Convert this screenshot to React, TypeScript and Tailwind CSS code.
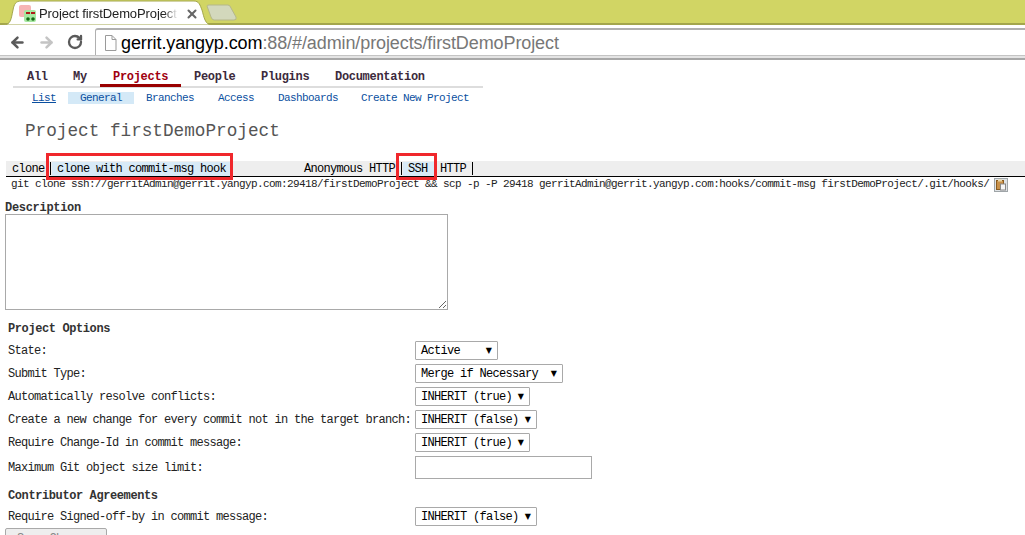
import { ArrowLeft, ArrowRight, RotateCw, X } from "lucide-react";

const mono = "font-['Liberation_Mono',monospace]";

const topMenu = [
  { label: "All", w: "w-[46px]" },
  { label: "My", w: "w-[40px]" },
  { label: "Projects", w: "w-[94px]", active: true },
  { label: "People", w: "w-[67px]" },
  { label: "Plugins", w: "w-[74px]" },
  { label: "Documentation", w: "w-[100px]" },
];

const subMenu = [
  { label: "Branches", w: "w-[72px]" },
  { label: "Access", w: "w-[60px]" },
  { label: "Dashboards", w: "w-[83px]" },
  { label: "Create New Project", w: "w-[110px]" },
];

function Dropdown({ value, w }: { value: string; w: string }) {
  return (
    <div
      className={`flex h-[19px] items-center justify-between rounded-[1px] border border-[#a9a9a9] bg-white pl-[5px] pr-[5px] text-[12px] tracking-[-0.7px] text-black ${w}`}
    >
      <span className="whitespace-pre">{value}</span>
      <span className="font-['DejaVu_Sans',sans-serif] text-[8px] tracking-normal">▼</span>
    </div>
  );
}

function OptionRow({ label, children }: { label: string; children?: React.ReactNode }) {
  return (
    <div className="flex h-[23px] items-center">
      <div className="w-[407px] whitespace-pre text-[12px] tracking-[-0.7px] text-[#222]">{label}</div>
      {children}
    </div>
  );
}

function Favicon() {
  return (
    <svg width="17" height="17" viewBox="0 0 17 17" className="shrink-0">
      <rect x="0" y="0" width="12" height="12" rx="2" fill="#f7b5b5" />
      <rect x="5" y="5" width="12" height="12" rx="2" fill="#a6e8a0" />
      <rect x="7" y="7" width="4" height="2" fill="#b01818" />
      <rect x="12" y="7" width="4" height="2" fill="#b01818" />
      <circle cx="9" cy="14" r="1.8" fill="#156b15" />
      <circle cx="14" cy="14" r="1.8" fill="#156b15" />
    </svg>
  );
}

function BrowserChrome() {
  return (
    <>
      <div className="relative flex h-[25px] border-b-2 border-[#a3a64c] bg-[#d1d564] font-['Liberation_Sans',sans-serif]">
        <svg width="240" height="25" viewBox="0 0 240 25" className="absolute left-0 top-0">
          <path d="M3 25 C11 25 11 19 13 10 C14 4 16 1 21 1 L194 1 C199 1 200 5 202 10 C204 17 205 25 212 25 Z" fill="#fff" stroke="#a3a64c" />
          <path d="M207 6 Q207 5 209 5 L228 5 Q230 5 231 8 L236 17 Q237 20 234 20 L214 20 Q212 20 211 17 Z" fill="#d3d8bc" stroke="#b4b78a" />
        </svg>
        <div className="relative ml-[19px] mt-[5px] flex h-[17px] w-[180px] items-center">
          <Favicon />
          <span className="ml-[3px] w-[139px] overflow-hidden whitespace-nowrap text-[13px] tracking-[-0.1px] text-[#222] [mask-image:linear-gradient(to_right,black_90%,transparent)]">
            Project firstDemoProject
          </span>
          <X size={14} strokeWidth={3.5} className="ml-[7px] text-[#666]" />
        </div>
      </div>
      <div className="flex h-[30px] items-end bg-white font-['Liberation_Sans',sans-serif]">
        <div className="flex h-[30px] w-[95px] items-center pl-[9px] pt-[4px]">
          <ArrowLeft size={17} strokeWidth={3.5} className="text-[#5a5a5a]" />
          <ArrowRight size={17} strokeWidth={3.5} className="ml-[12px] text-[#c4c4c4]" />
          <RotateCw size={16} strokeWidth={3.5} className="ml-[12px] text-[#5a5a5a]" />
        </div>
        <div className="flex h-[27px] flex-1 items-center rounded-tl-[3px] border-l border-t-2 border-[#b0b0b0] pl-[8px]">
          <svg width="13" height="16" viewBox="0 0 13 16" className="shrink-0">
            <path d="M1.5 .5 H8 L12 4.5 V15.5 H1.5 Z M8 .5 V4.5 H12" fill="#fff" stroke="#9a9a9a" />
          </svg>
          <span className="ml-[4px] whitespace-nowrap text-[18px] tracking-[-0.1px] text-black">
            gerrit.yangyp.com<span className="text-[#777]">:88/#/admin/projects/firstDemoProject</span>
          </span>
        </div>
      </div>
      <div className="h-[5px] border-b-2 border-t border-b-[#a8a8a8] border-t-[#c4c4c4] bg-[#e4e4e4]" />
    </>
  );
}

function Menus() {
  return (
    <div className="ml-[13px] w-[470px]">
      <div className="flex h-[28px] items-start border-b-2 border-[#ddd] pl-[14px] pt-[11px] text-[12px] font-bold tracking-[-0.3px]">
        {topMenu.map((m) => (
          <div key={m.label} className={`${m.w} ${m.active ? "-ml-[13px] pl-[13px]" : ""} relative h-[15px] whitespace-nowrap ${m.active ? "text-[#a00010]" : "text-[#3c2a3c]"}`}>
            {m.label}
            {m.active && <div className="absolute bottom-[-1px] left-0 h-[3px] w-[81px] bg-[#990000]" />}
          </div>
        ))}
      </div>
      <div className="mt-[3px] flex h-[14px] items-center pl-[19px] text-[#0a4fa0]">
        <span className="w-[36px] underline">List</span>
        <span className="flex h-[12px] w-[66px] items-center justify-center bg-[#d4e9f7]">General</span>
        <div className="ml-[12px] flex">
          {subMenu.map((m) => (
            <span key={m.label} className={`${m.w} whitespace-nowrap`}>
              {m.label}
            </span>
          ))}
        </div>
      </div>
    </div>
  );
}

function Sep() {
  return <div className="h-[13px] w-px shrink-0 bg-black" />;
}

function CloneBar() {
  return (
    <div className="relative mt-[20px]">
      <div className="ml-[6px] flex h-[16px] items-center border-b border-black bg-[#eeeeee] text-[12px] tracking-[-0.7px] text-black">
        <span className="ml-[6px] w-[38px]">clone</span>
        <Sep />
        <span className="ml-[1px] flex h-[14px] w-[178px] items-center bg-[#d8eaf7] pl-[5px]">clone with commit-msg hook</span>
        <span className="ml-[74px] w-[97px] whitespace-nowrap">Anonymous HTTP</span>
        <Sep />
        <span className="ml-[1px] flex h-[14px] w-[31px] items-center bg-[#d8eaf7] pl-[5px]">SSH</span>
        <Sep />
        <span className="ml-[5px] w-[32px]">HTTP</span>
        <Sep />
      </div>
      <div className="pointer-events-none absolute left-[46px] top-[-8px] h-[27px] w-[187px] border-[3px] border-[#f0282c]" />
      <div className="pointer-events-none absolute left-[396px] top-[-8px] h-[27px] w-[41px] border-[3px] border-[#f0282c]" />
      <div className="flex h-[15px] items-center whitespace-nowrap pl-[11px] text-[#222]">
        git clone ssh://gerritAdmin@gerrit.yangyp.com:29418/firstDemoProject &amp;&amp; scp -p -P 29418 gerritAdmin@gerrit.yangyp.com:hooks/commit-msg firstDemoProject/.git/hooks/
        <svg width="14" height="14" viewBox="0 0 14 14" className="ml-[5px] shrink-0">
          <rect x=".5" y=".5" width="13" height="13" fill="#dfe3e6" stroke="#9fa5a8" />
          <rect x="2.5" y="2.5" width="7" height="9" fill="#c9914a" stroke="#8a5c20" />
          <rect x="4" y="1.5" width="4" height="2" fill="#e9d7a8" />
          <rect x="6.5" y="6" width="5" height="6" fill="#f6f6f6" stroke="#888" />
        </svg>
      </div>
    </div>
  );
}

export default function App() {
  return (
    <div className={`h-[535px] w-[1025px] overflow-hidden bg-white text-[11px] leading-none tracking-[-0.6px] ${mono}`}>
      <BrowserChrome />
      <Menus />
      <h1 className="ml-[25px] mt-[16px] h-[20px] text-[17.7px] font-normal leading-[20px] tracking-normal text-[#555]">
        Project firstDemoProject
      </h1>
      <CloneBar />
      <div className="ml-[5px] mt-[10px] h-[12px] text-[12px] font-bold tracking-[-0.3px] text-[#333]">Description</div>
      <textarea
        readOnly
        className="ml-[5px] block h-[96px] w-[443px] border border-[#a9a9a9] bg-white"
      />
      <div className="ml-[8px] mt-[13px]">
        <div className="h-[16px] text-[12px] font-bold tracking-[-0.4px] text-[#333]">Project Options</div>
        <OptionRow label="State:">
          <Dropdown value="Active" w="w-[83px]" />
        </OptionRow>
        <OptionRow label="Submit Type:">
          <Dropdown value="Merge if Necessary" w="w-[148px]" />
        </OptionRow>
        <OptionRow label="Automatically resolve conflicts:">
          <Dropdown value="INHERIT (true)" w="w-[115px]" />
        </OptionRow>
        <OptionRow label="Create a new change for every commit not in the target branch:">
          <Dropdown value="INHERIT (false)" w="w-[122px]" />
        </OptionRow>
        <OptionRow label="Require Change-Id in commit message:">
          <Dropdown value="INHERIT (true)" w="w-[115px]" />
        </OptionRow>
        <div className="mt-[2px]">
          <OptionRow label="Maximum Git object size limit:">
            <div className="h-[23px] w-[177px] border border-[#a9a9a9] bg-white" />
          </OptionRow>
        </div>
        <div className="mt-[11px] h-[15px] text-[12px] font-bold tracking-[-0.4px] text-[#333]">Contributor Agreements</div>
        <OptionRow label="Require Signed-off-by in commit message:">
          <Dropdown value="INHERIT (false)" w="w-[122px]" />
        </OptionRow>
      </div>
      <button className="ml-[5px] h-[22px] w-[102px] rounded-[2px] border border-[#a9a9a9] bg-[#eeeeee] text-[12px] tracking-[-0.7px] text-[#888]">
        Save Changes
      </button>
    </div>
  );
}
